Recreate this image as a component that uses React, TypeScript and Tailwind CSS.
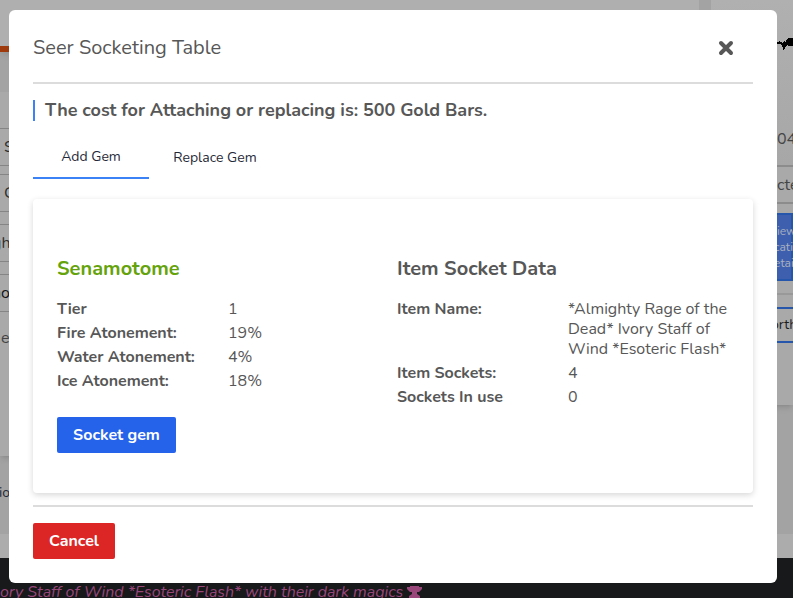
import React from 'react';

type Row = { label: string; value: string };

const gemRows: Row[] = [
  { label: 'Tier', value: '1' },
  { label: 'Fire Atonement:', value: '19%' },
  { label: 'Water Atonement:', value: '4%' },
  { label: 'Ice Atonement:', value: '18%' },
];

const socketRows: Row[] = [
  { label: 'Item Name:', value: '*Almighty Rage of the Dead* Ivory Staff of Wind *Esoteric Flash*' },
  { label: 'Item Sockets:', value: '4' },
  { label: 'Sockets In use', value: '0' },
];

function DataList({ rows }: { rows: Row[] }) {
  return (
    <dl className="flex flex-col gap-1">
      {rows.map((row) => (
        <div key={row.label} className="grid grid-cols-2 gap-2.5">
          <dt className="font-bold tracking-[-0.02px] whitespace-nowrap">{row.label}</dt>
          <dd>{row.value}</dd>
        </div>
      ))}
    </dl>
  );
}

function LeftStrip() {
  return (
    <div className="flex w-[699px] flex-col overflow-hidden whitespace-nowrap text-base leading-5 text-[#2f2f2f]">
      <div className="h-[46px] bg-[#afafaf]" />
      <div className="h-1.5 bg-[#9f3a0c] shadow-md" />
      <div className="h-10" />
      <div className="flex h-[364px] flex-col bg-[#a9a9a9] pt-9 shadow-md">
        <div className="h-[38px] border-y border-[#858585] pt-2 pl-1">S</div>
        <div className="mt-2 h-[38px] border-y border-[#858585] pt-2 pl-1">C</div>
        <div className="mt-3 h-[38px] border-y border-[#858585] pt-2"><span className="-ml-[8px]">gh</span></div>
        <div className="mt-3 h-[38px] border-y border-[#858585] pt-2 text-[#151515]"><span className="-ml-[8px]">no</span></div>
        <div className="pt-4 pl-px text-[#444]">e</div>
      </div>
      <div className="h-[78px] pt-[27px] text-sm text-[#1f2937]"><span className="-ml-px">io</span></div>
      <div className="h-6 bg-[#acacac]" />
    </div>
  );
}

function RightStrip() {
  return (
    <div className="flex w-[82px] flex-col overflow-hidden whitespace-nowrap bg-[#a3a3a3]">
      <div className="flex h-[405px] flex-col bg-[#a9a9a9] shadow-md">
        <div className="flex h-[165px] flex-col items-end bg-linear-to-b from-[#b0b0b0] to-[#a7a7a7]">
          <svg className="mt-9 h-4 w-4" viewBox="0 0 16 16" shapeRendering="crispEdges">
            <path d="M0 6h2v-1h1v1h2v1h1v-1h1v-1h1v1h1V4h1V3h1V2h5v8h-5V9h-1v1H9v1H8v2H7v1H6v-3H5V9H4V8H0z" fill="#000" />
          </svg>
          <div className="mt-[77px] w-4 text-base leading-5 text-[#444]">04</div>
        </div>
        <div className="h-[39px] border-y-2 border-[#8c8c8c] pt-2 pl-[66px] text-base leading-5 text-[#444]">cte</div>
        <div className="mt-[9px] h-[68px] border-2 border-[#2556ac] bg-[#3d5fae] pt-2 pl-[64px] text-xs leading-4 text-[#a9b0c0]">
          <div>iew</div>
          <div className="-ml-[3px]">cati</div>
          <div className="-ml-[3px]">etai</div>
        </div>
        <div className="mt-3 h-0.5 bg-[#999]" />
        <div className="mt-3 h-9 border-y-2 border-[#2556ac] pt-1.5 pl-[60px] text-sm leading-5 text-[#1d1d1d]">orth</div>
      </div>
      <div className="h-[129px]" />
      <div className="h-6 bg-[#acacac]" />
    </div>
  );
}

function Modal() {
  return (
    <section className="absolute top-2.5 left-[9px] z-20 flex h-[573px] w-[768px] flex-col rounded-md bg-white px-6 text-base leading-5 text-[#575757]">
      <header className="flex h-[74px] items-center justify-between border-b-2 border-[#dcdcdc] pt-0.5 pr-[19px]">
        <h2 className="pt-0.5 text-xl leading-7">Seer Socketing Table</h2>
        <svg className="mt-0.5 h-4 w-4" viewBox="0 0 16 16" fill="none" stroke="#575757" strokeWidth="4" strokeLinecap="round">
          <path d="M3 3l10 10M13 3L3 13" />
        </svg>
      </header>
      <h3 className="mt-4 h-[21px] border-l-2 border-[#3b82f6] pl-2.5 text-lg leading-[21px] font-bold tracking-[-0.02px]">
        The cost for Attaching or replacing is: 500 Gold Bars.
      </h3>
      <nav className="mt-4 flex h-[42px] text-sm leading-5 text-[#1f2937]">
        <button className="w-[116px] border-b-2 border-[#3b82f6]">Add Gem</button>
        <button className="w-[132px]">Replace Gem</button>
      </nav>
      <div className="mt-5 grid h-[294px] grid-cols-2 gap-2 rounded-sm bg-white px-6 pt-[58px] shadow-[0_2px_6px_rgba(0,0,0,0.16)]">
        <div>
          <h4 className="mb-[18px] text-xl leading-6 font-bold text-[#65a30d]">Senamotome</h4>
          <DataList rows={gemRows} />
          <button className="mt-[26px] h-9 w-[119px] rounded-xs bg-[#2563eb] font-bold text-white">Socket gem</button>
        </div>
        <div>
          <h4 className="mb-[18px] text-xl leading-6 font-bold">Item Socket Data</h4>
          <DataList rows={socketRows} />
        </div>
      </div>
      <div className="mt-3 h-0.5 bg-[#dcdcdc]" />
      <button className="mt-4 h-9 w-[82px] rounded-xs bg-[#dc2626] font-bold text-white">Cancel</button>
    </section>
  );
}

export default function App() {
  return (
    <main className="relative flex h-[598px] w-[793px] flex-col overflow-hidden bg-[#a3a3a3] font-['Nunito','Noto_Sans',sans-serif]">
      <div className="flex h-[558px] justify-between">
        <LeftStrip />
        <RightStrip />
      </div>
      <div className="flex h-10 items-center bg-[#17191b] pt-[27px] text-base tracking-[-0.04px] whitespace-nowrap text-[#99477a] italic">
        ory Staff of Wind *Esoteric Flash* with their dark magics
        <svg className="ml-1 h-3 w-[15px]" viewBox="0 0 15 12" fill="currentColor">
          <path d="M3 0h9v1h3v2l-3 3h-2v2l3 2v2H2v-2l3-2V6H3L0 3V1h3z" />
        </svg>
      </div>
      <Modal />
    </main>
  );
}
